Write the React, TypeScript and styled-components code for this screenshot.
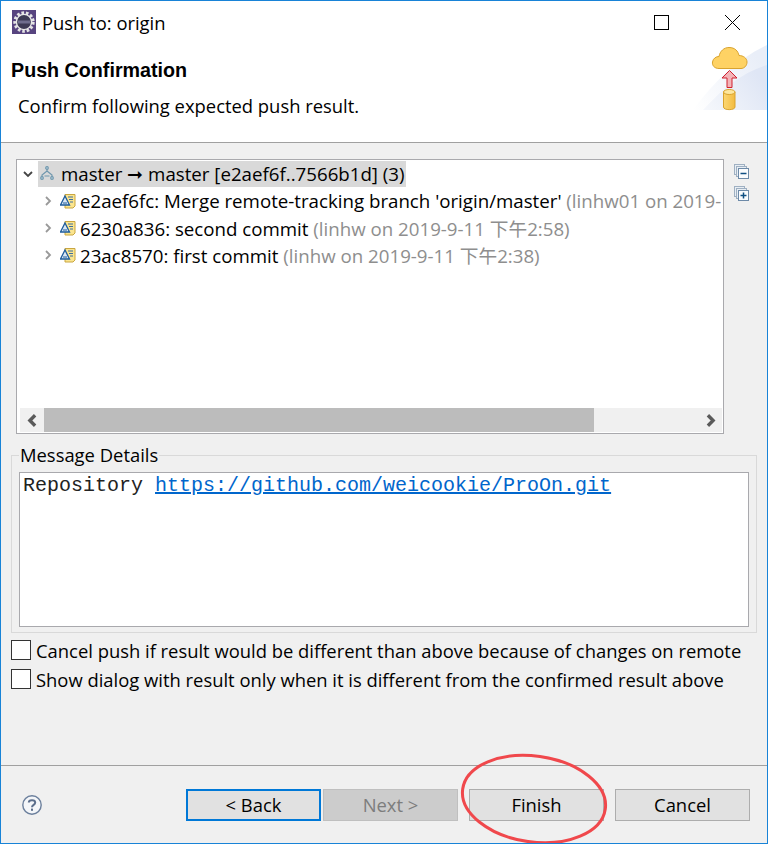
import React from "react";
import styled, { createGlobalStyle } from "styled-components";

const commits = [
  { id: "e2aef6fc", text: "Merge remote-tracking branch 'origin/master'", meta: "(linhw01 on 2019-" },
  { id: "6230a836", text: "second commit", meta: "(linhw on 2019-9-11 下午2:58)" },
  { id: "23ac8570", text: "first commit", meta: "(linhw on 2019-9-11 下午2:38)" },
];

const AppIcon = () => (
  <svg width="24" height="24" viewBox="0 0 24 24">
    <rect width="24" height="24" fill="#57447f" />
    <circle cx="12" cy="12" r="9" fill="none" stroke="#e4e4e4" strokeWidth="3.4" strokeDasharray="2.6 1.8" />
    <circle cx="12" cy="12" r="7.6" fill="#3d3a55" stroke="#e8e8e8" strokeWidth="1.4" />
    <rect x="6" y="10.500" width="12" height="3" fill="#6f6d8e" />
  </svg>
);

const BannerArt = () => (
  <svg width="76" height="111" viewBox="0 0 76 111">
    <defs>
      <linearGradient id="bannerOuter" x1="0" y1="1" x2="1" y2="0.4">
        <stop offset="0" stopColor="#ffffff" />
        <stop offset="1" stopColor="#e9eef8" />
      </linearGradient>
      <linearGradient id="bannerInner" x1="0" y1="1" x2="1" y2="0.5">
        <stop offset="0" stopColor="#f6f8fc" />
        <stop offset="1" stopColor="#dfe6f5" />
      </linearGradient>
      <linearGradient id="canFill" x1="0" y1="0" x2="1" y2="0">
        <stop offset="0" stopColor="#fbd774" />
        <stop offset="1" stopColor="#f3bb40" />
      </linearGradient>
    </defs>
    <path d="M2 110 C24 80 48 58 76 45 V110 Z" fill="url(#bannerOuter)" />
    <path d="M12 110 C32 88 52 72 76 65 V110 Z" fill="url(#bannerInner)" />
    <path d="M28 68.500 C23 68.500 21 65 21.500 62 C22 58.500 25 56.500 28 56.500 C29 51 33 47.500 38 47.500 C44 47.500 47 51 48 55.500 C52 55.500 56 58 56 62 C56 66 53 68.500 50 68.500 Z" fill="#fed264" stroke="#d9a32e" strokeWidth="1" />
    <path d="M38.500 70.500 L46 78 H41 V87.500 H36 V78 H31 Z" fill="#f3b3b8" stroke="#d0202f" strokeWidth="1" />
    <path d="M32.500 92 V107 C32.500 110.500 44 110.500 44 107 V92 Z" fill="url(#canFill)" stroke="#d9a32e" strokeWidth="1" />
    <ellipse cx="38.250" cy="92" rx="5.750" ry="2.500" fill="#fde79f" stroke="#d9a32e" strokeWidth="1" />
  </svg>
);

const BranchIcon = () => (
  <svg width="16" height="16" viewBox="0 0 16 16" fill="none" stroke="#6f97ad" strokeWidth="1.2">
    <path d="M8 1.500 V6 M8 6 L3 10 V13 M8 6 L13 10 V13 M5.500 11 H10.500" />
    <circle cx="8" cy="3" r="1.300" fill="#cfe0e8" />
    <circle cx="3" cy="13" r="1.300" fill="#cfe0e8" />
    <circle cx="13" cy="13" r="1.300" fill="#cfe0e8" />
  </svg>
);

const CommitIcon = () => (
  <svg width="16" height="16" viewBox="0 0 16 16">
    <path d="M5 1.500 H15 V13 L13 15 H5 Z" fill="#fbe58f" stroke="#c9a640" strokeWidth="1" />
    <path d="M8 4 H13 M9 6.500 H13 M10 9 H13" stroke="#3c6e9f" strokeWidth="1" />
    <path d="M5 3 L9.500 12 H0.500 Z" fill="#dbe8f5" stroke="#1e5c9c" strokeWidth="1.300" />
    <path d="M3 10 H7" stroke="#1e5c9c" strokeWidth="1" />
  </svg>
);

const CollapseIcon = ({ plus }: { plus?: boolean }) => (
  <svg width="15" height="15" viewBox="0 0 15 15">
    <rect x="0.500" y="0.500" width="10" height="10" fill="#e8eef4" stroke="#9fb0c2" />
    <rect x="2.500" y="2.500" width="10" height="10" fill="#e8eef4" stroke="#9fb0c2" />
    <rect x="4.500" y="4.500" width="10" height="10" fill="#fafcfe" stroke="#6d8aa8" />
    <path d={plus ? "M6.500 9.500 H12.500 M9.500 6.500 V12.500" : "M6.500 9.500 H12.500"} stroke="#0f4f82" strokeWidth="1.500" fill="none" />
  </svg>
);

const Chevron = ({
  dir,
  color,
  width = 1.8,
  size = 10,
}: {
  dir: "down" | "right" | "left";
  color: string;
  width?: number;
  size?: number;
}) => {
  const d = dir === "down" ? "M1 3 L5 7 L9 3" : dir === "right" ? "M3 1 L7 5 L3 9" : "M7 1 L3 5 L7 9";
  return (
    <svg width={size} height={size} viewBox="0 0 10 10" fill="none" stroke={color} strokeWidth={width}>
      <path d={d} />
    </svg>
  );
};

const App: React.FC = () => {
  return (
    <Window>
      <GlobalStyle />
      <TitleBar>
        <AppIcon />
        <WindowTitle>Push to: origin</WindowTitle>
        <WindowControls>
          <svg width="15" height="15" viewBox="0 0 15 15" fill="none" stroke="#000">
            <rect x="0.500" y="0.500" width="14" height="14" />
          </svg>
          <svg width="15" height="15" viewBox="0 0 15 15" fill="none" stroke="#000">
            <path d="M0 0 L15 15 M15 0 L0 15" />
          </svg>
        </WindowControls>
      </TitleBar>

      <Banner>
        <BannerText>
          <Heading>Push Confirmation</Heading>
          <SubHeading>Confirm following expected push result.</SubHeading>
        </BannerText>
        <BannerImage>
          <BannerArt />
        </BannerImage>
      </Banner>

      <Body>
        <TreeRow>
          <TreeBox>
            <TreeList>
              <RootRow>
                <Chevron dir="down" color="#444" />
                <RootSelection>
                  <BranchIcon />
                  <span>master ➞ master [e2aef6f..7566b1d] (3)</span>
                </RootSelection>
              </RootRow>
              {commits.map((c) => (
                <CommitRow key={c.id}>
                  <Chevron dir="right" color="#999" />
                  <CommitIcon />
                  <CommitLabel>
                    {c.id}: {c.text} <Meta>{c.meta}</Meta>
                  </CommitLabel>
                </CommitRow>
              ))}
            </TreeList>
            <ScrollBar>
              <ScrollButton>
                <Chevron dir="left" color="#5a5a5a" width={2.6} size={13} />
              </ScrollButton>
              <ScrollThumb />
              <ScrollTrack />
              <ScrollButton>
                <Chevron dir="right" color="#5a5a5a" width={2.6} size={13} />
              </ScrollButton>
            </ScrollBar>
          </TreeBox>
          <TreeTools>
            <CollapseIcon />
            <CollapseIcon plus />
          </TreeTools>
        </TreeRow>

        <MessageGroup>
          <MessageLegend>Message Details</MessageLegend>
          <MessageBox>
            Repository <MessageLink>https://github.com/weicookie/ProOn.git</MessageLink>
          </MessageBox>
        </MessageGroup>

        <Options>
          <OptionRow>
            <CheckBox />
            Cancel push if result would be different than above because of changes on remote
          </OptionRow>
          <OptionRow>
            <CheckBox />
            Show dialog with result only when it is different from the confirmed result above
          </OptionRow>
        </Options>
      </Body>

      <Footer>
        <HelpButton>
          <svg width="20" height="20" viewBox="0 0 20 20">
            <circle cx="10" cy="10" r="9.200" fill="#f4f6f9" stroke="#6b7f9c" strokeWidth="1.400" />
            <path d="M6.800 7.600 C6.800 4.400 13.200 4.400 13.200 7.600 C13.200 10 10 9.800 10 12.300" fill="none" stroke="#5c6f8c" strokeWidth="2" />
            <rect x="9" y="13.600" width="2" height="2.200" fill="#5c6f8c" />
          </svg>
        </HelpButton>
        <ButtonGroup>
          <NavPair>
            <DialogButton $variant="focused">&lt; Back</DialogButton>
            <DialogButton $variant="disabled">Next &gt;</DialogButton>
          </NavPair>
          <DialogButton>Finish</DialogButton>
          <DialogButton>Cancel</DialogButton>
        </ButtonGroup>
        <Annotation width="148" height="104" viewBox="0 0 148 104">
          <ellipse cx="74" cy="47" rx="72" ry="43" fill="none" stroke="#f0484c" strokeWidth="3" transform="rotate(8 74 47)" />
        </Annotation>
      </Footer>
    </Window>
  );
};

const GlobalStyle = createGlobalStyle`
  html, body {
    margin: 0;
    padding: 0;
    background: #f0f0f0;
  }
  * {
    box-sizing: border-box;
  }
  svg {
    flex: none;
  }
`;

const uiFont = `"Open Sans", "Noto Sans CJK SC", sans-serif`;

const Window = styled.div`
  width: 768px;
  height: 844px;
  display: flex;
  flex-direction: column;
  border: 1px solid #1883d7;
  background: #f0f0f0;
  font-family: ${uiFont};
  font-size: 18.400px;
  color: #000;
  overflow: hidden;
`;

const TitleBar = styled.div`
  height: 44px;
  flex: none;
  display: flex;
  align-items: center;
  padding: 0 27px 2px 11px;
  background: #fff;
`;

const WindowTitle = styled.div`
  margin-left: 6px;
`;

const WindowControls = styled.div`
  margin-left: auto;
  display: flex;
  gap: 56px;
`;

const Banner = styled.div`
  position: relative;
  height: 98px;
  flex: none;
  background: #fff;
  border-bottom: 1px solid #a0a0a0;
`;

const BannerText = styled.div`
  padding: 0 0 0 10px;
`;

const Heading = styled.h1`
  margin: 0;
  padding-top: 12px;
  font: bold 19.700px/26px "Liberation Sans", sans-serif;
`;

const SubHeading = styled.p`
  margin: 11px 0 0 7px;
  line-height: 24px;
`;

const BannerImage = styled.div`
  position: absolute;
  top: -45px;
  right: 0;
  height: 111px;
`;

const Body = styled.div`
  flex: 1;
  display: flex;
  flex-direction: column;
  padding: 16px 10px 0;
  border-bottom: 1px solid #a0a0a0;
`;

const TreeRow = styled.div`
  display: flex;
  gap: 10px;
  margin-left: 5px;
`;

const TreeBox = styled.div`
  width: 708px;
  height: 275px;
  display: flex;
  flex-direction: column;
  background: #fff;
  border: 1px solid #a9a9ad;
  overflow: hidden;
`;

const TreeList = styled.div`
  flex: 1;
  padding-top: 1px;
  font-size: 18.700px;
  overflow: hidden;
`;

const RootRow = styled.div`
  height: 26px;
  display: flex;
  align-items: center;
  padding-left: 6px;
  white-space: nowrap;
`;

const RootSelection = styled.div`
  height: 26px;
  margin-left: 5px;
  display: flex;
  align-items: center;
  gap: 6px;
  padding: 0 1px 2px;
  background: #d9d9d9;
`;

const CommitRow = styled.div`
  height: 27px;
  display: flex;
  align-items: center;
  gap: 7px;
  padding-left: 26px;
  white-space: nowrap;
`;

const CommitLabel = styled.span`
  margin-left: -3px;
`;

const Meta = styled.span`
  color: #8e8e8e;
`;

const ScrollBar = styled.div`
  flex: none;
  height: 24px;
  margin: 0 1px 1px 3px;
  display: flex;
  background: #f0f0f0;
`;

const ScrollButton = styled.div`
  flex: none;
  width: 24px;
  display: flex;
  align-items: center;
  justify-content: center;
`;

const ScrollThumb = styled.div`
  width: 550px;
  background: #bcbcbc;
`;

const ScrollTrack = styled.div`
  flex: 1;
`;

const TreeTools = styled.div`
  display: flex;
  flex-direction: column;
  gap: 7px;
  padding-top: 5px;
`;

const MessageGroup = styled.fieldset`
  width: 746px;
  height: 189px;
  margin: 10px 0 0;
  padding: 0 7px 5px 7px;
  border: 1px solid #d9d9d9;
  min-width: 0;
`;

const MessageLegend = styled.legend`
  margin-left: 0;
  padding: 0 1px;
  line-height: 22px;
`;

const MessageBox = styled.div`
  height: 155px;
  margin-top: 6px;
  padding: 1px 3px;
  background: #fff;
  border: 1px solid #a9a9ad;
  color: #222;
  font: 20px/24px "Liberation Mono", monospace;
`;

const MessageLink = styled.span`
  color: #0066cc;
  text-decoration: underline;
`;

const Options = styled.div`
  display: flex;
  flex-direction: column;
  gap: 9px;
  margin-top: 7px;
`;

const OptionRow = styled.label`
  height: 20px;
  display: flex;
  align-items: center;
  gap: 5px;
  white-space: nowrap;
`;

const CheckBox = styled.span`
  flex: none;
  width: 20px;
  height: 20px;
  background: #fff;
  border: 1px solid #333;
`;

const Footer = styled.div`
  position: relative;
  flex: none;
  height: 77px;
  display: flex;
  align-items: center;
  padding: 0 17px 0 21px;
  justify-content: space-between;
`;

const HelpButton = styled.div`
  width: 20px;
  height: 20px;
  margin-top: 1px;
`;

const ButtonGroup = styled.div`
  display: flex;
  gap: 11px;
  margin-top: 1px;
`;

const NavPair = styled.div`
  display: flex;
  gap: 2px;
`;

const DialogButton = styled.button<{ $variant?: "focused" | "disabled" }>`
  width: 135px;
  height: 32px;
  padding: 0 0 2px;
  font-family: ${uiFont};
  font-size: 18.400px;
  background: ${(p) => (p.$variant === "disabled" ? "#cccccc" : "#e1e1e1")};
  color: ${(p) => (p.$variant === "disabled" ? "#7d7d7d" : "#000")};
  border: ${(p) =>
    p.$variant === "focused"
      ? "2px solid #0078d7"
      : p.$variant === "disabled"
        ? "1px solid #bfbfbf"
        : "1px solid #adadad"};
`;

const Annotation = styled.svg`
  position: absolute;
  left: 459px;
  top: -14px;
  overflow: visible;
  pointer-events: none;
`;

export default App;
